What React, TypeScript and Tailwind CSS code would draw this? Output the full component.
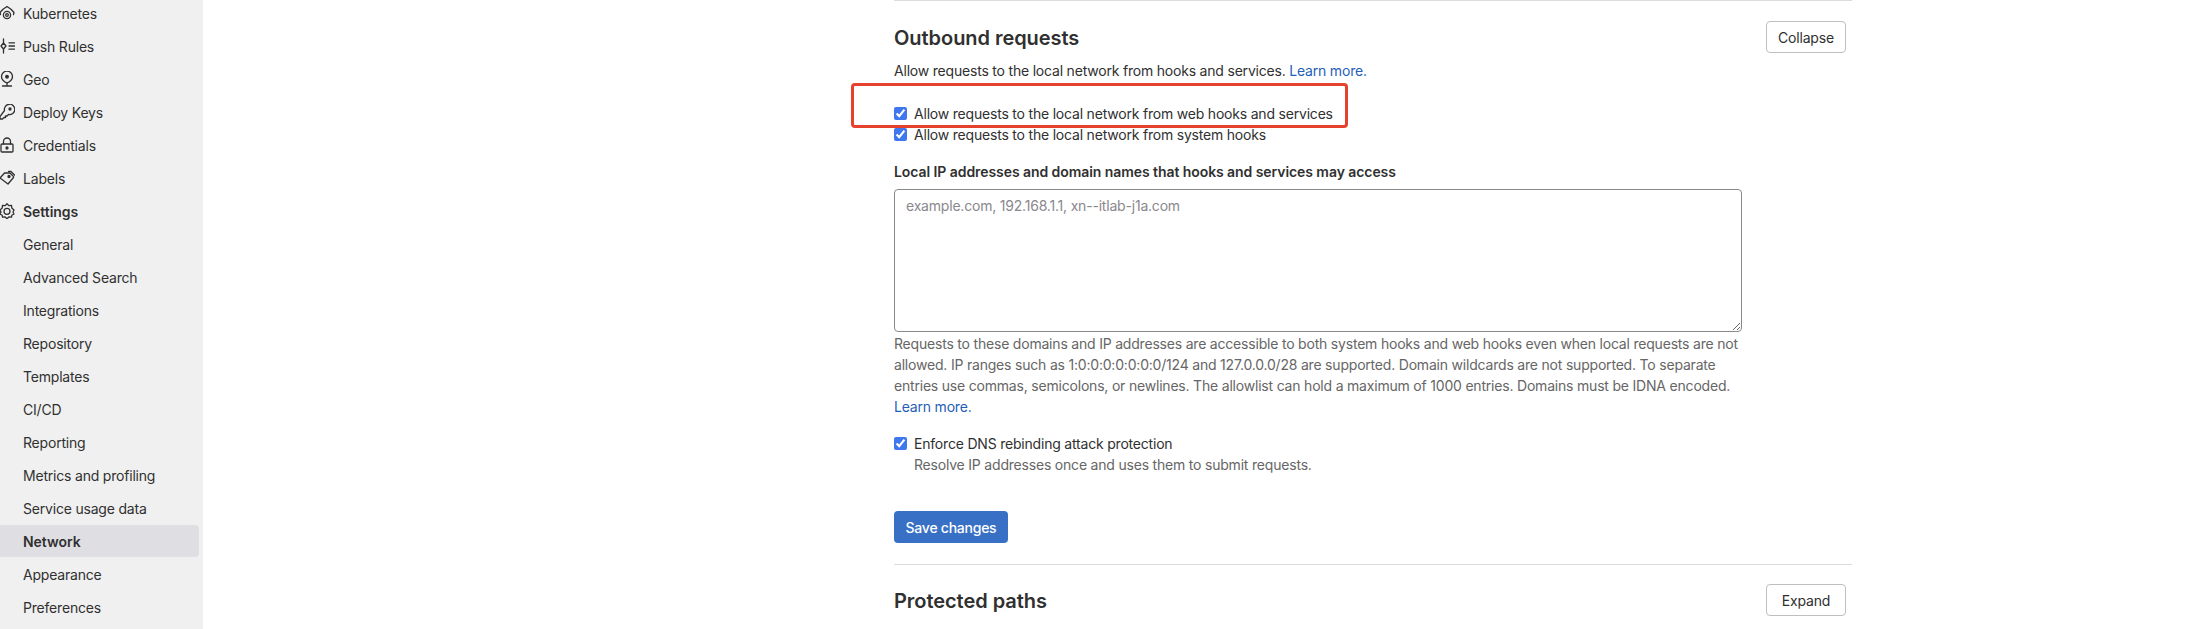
const SANS = 'font-["Inter","Noto_Sans",sans-serif]'

const icons: Record<string, React.ReactNode> = {
  kubernetes: (
    <>
      <path d="M1.500 9.500 1 7.500 4 4.200 8 1.500l4 2.700 3 3.300-.5 2" />
      <circle cx="8" cy="10" r="3.600" />
      <circle cx="8" cy="10" r="1.300" />
    </>
  ),
  push: (
    <>
      <path d="M4.500 1v4M4.500 11v4" />
      <path d="M4.500 5 7 8l-2.500 3L2 8Z" />
      <path d="M10 4.800h5.500M10 8h5.500M10 11.200h5.500" />
    </>
  ),
  geo: (
    <>
      <path d="M8 12c-3-1.400-5.500-3.500-5.500-6.300a5.500 5.500 0 0 1 11 0C13.500 8.500 11 10.600 8 12Z" />
      <circle cx="8" cy="5.700" r="1.300" fill="currentColor" />
      <path d="M8 12v3M3.500 15h9" />
    </>
  ),
  key: (
    <>
      <path d="M5.500 6.500a5.200 5.200 0 1 1 4 4L8 12H6.500v1.500H5L3.500 15H1v-2.500Z" />
      <circle cx="11" cy="5" r="1" fill="currentColor" />
    </>
  ),
  lock: (
    <>
      <rect x="2" y="7" width="12" height="8" rx="1" />
      <path d="M4.500 7V4.500a3.500 3.500 0 0 1 7 0V7" />
      <circle cx="8" cy="11" r="1" fill="currentColor" />
    </>
  ),
  labels: (
    <>
      <path d="M5.500 3H11l3.500 3.500v1L9 14 1 8Z" />
      <path d="M9.500 1.500H12L15.500 5" />
      <circle cx="10" cy="6.500" r="1" fill="currentColor" />
    </>
  ),
  settings: (
    <>
      <path d="M8 .8l1.800 1.800 2.700-.2.300 2.600L15 7l-1 2 1 2-2.200 1.300-.3 1.900-2.700-.2L8 15.700l-1.800-1.700-2.700.2-.3-1.900L1 11l1-2-1-2 2.200-1.900.3-2.700 2.700.2Z" />
      <circle cx="8" cy="8.300" r="3" />
    </>
  ),
}

type NavItem = { label: string; icon?: string; bold?: boolean; active?: boolean }

const NAV: NavItem[] = [
  { label: 'Kubernetes', icon: 'kubernetes' },
  { label: 'Push Rules', icon: 'push' },
  { label: 'Geo', icon: 'geo' },
  { label: 'Deploy Keys', icon: 'key' },
  { label: 'Credentials', icon: 'lock' },
  { label: 'Labels', icon: 'labels' },
  { label: 'Settings', icon: 'settings', bold: true },
  { label: 'General' },
  { label: 'Advanced Search' },
  { label: 'Integrations' },
  { label: 'Repository' },
  { label: 'Templates' },
  { label: 'CI/CD' },
  { label: 'Reporting' },
  { label: 'Metrics and profiling' },
  { label: 'Service usage data' },
  { label: 'Network', bold: true, active: true },
  { label: 'Appearance' },
  { label: 'Preferences' },
]

function Sidebar() {
  return (
    <aside className="w-[203px] shrink-0 h-[629px] overflow-hidden bg-[#f0f0f0] text-[14px] text-[#303030]">
      <ul className="-mt-[3px]">
        {NAV.map((item) => (
          <li
            key={item.label}
            className={`relative h-8 mb-px mr-1 flex items-center pl-[23px] rounded-r ${item.active ? 'bg-[#dfdfe3]' : ''} ${item.bold ? 'font-semibold tracking-[-0.05px]' : ''}`}
          >
            {item.icon && (
              <svg
                viewBox="0 0 16 16"
                fill="none"
                stroke="currentColor"
                strokeWidth={1.300}
                strokeLinejoin="round"
                strokeLinecap="round"
                className="absolute -left-px w-4 h-4"
              >
                {icons[item.icon]}
              </svg>
            )}
            {item.label}
          </li>
        ))}
      </ul>
    </aside>
  )
}

function SectionHeader({ title, action }: { title: string; action: string }) {
  return (
    <div className="flex items-center justify-between pr-[6px]">
      <h2 className="h-8 pt-px text-[20px] leading-8 font-semibold tracking-[-0.05px] text-[#303030]">{title}</h2>
      <button className="h-8 w-20 rounded border border-[#bfbfc3] bg-white text-[14px] text-[#303030]">
        {action}
      </button>
    </div>
  )
}

function Check({ label }: { label: string }) {
  return (
    <label className="flex items-center h-[21px] gap-[7px] text-[#303030]">
      <input type="checkbox" defaultChecked className="m-0 w-[13px] h-[13px] accent-[#3f78ee]" />
      {label}
    </label>
  )
}

export default function App() {
  return (
    <div className={`flex h-[629px] overflow-hidden bg-white text-[14px] leading-[21px] tracking-[-0.2px] ${SANS}`}>
      <Sidebar />
      <main className="ml-[691px] w-[958px] shrink-0">
        <section className="relative border-t border-[#dcdcde] pt-5 pb-[21px] border-b">
          <SectionHeader title="Outbound requests" action="Collapse" />
          <p className="mt-[7px] text-[#303030]">
            Allow requests to the local network from hooks and services.{' '}
            <a href="#" className="text-[#1f5fb8]">Learn more.</a>
          </p>
          <div className="mt-[22px]">
            <Check label="Allow requests to the local network from web hooks and services" />
          </div>
          <Check label="Allow requests to the local network from system hooks" />
          <label className="block mt-[16px] font-semibold tracking-[-0.07px] text-[#303030]">
            Local IP addresses and domain names that hooks and services may access
          </label>
          <textarea
            placeholder="example.com, 192.168.1.1, xn--itlab-j1a.com"
            className="block mt-[7px] w-[848px] h-[143px] rounded border border-[#89888d] px-[11px] py-[5px] placeholder:text-[#89888d] outline-none"
          />
          <p className="mt-[1px] w-[848px] text-[#666666]">
            Requests to these domains and IP addresses are accessible to both system hooks and web hooks even when local requests are not allowed. IP ranges such as 1:0:0:0:0:0:0:0/124 and 127.0.0.0/28 are supported. Domain wildcards are not supported. To separate entries use commas, semicolons, or newlines. The allowlist can hold a maximum of 1000 entries. Domains must be IDNA encoded.{' '}
            <a href="#" className="text-[#1f5fb8]">Learn more.</a>
          </p>
          <div className="mt-[16px]">
            <Check label="Enforce DNS rebinding attack protection" />
            <p className="pl-5 text-[#666666]">Resolve IP addresses once and uses them to submit requests.</p>
          </div>
          <button className="block mt-[36px] h-8 w-[114px] rounded bg-[#3870c6] text-[14px] font-medium tracking-[-0.25px] text-white">
            Save changes
          </button>
          <div className="absolute left-[-43px] top-[82px] w-[497px] h-[45px] rounded border-[3px] border-[#e5412d]" />
        </section>
        <section className="pt-[19px]">
          <SectionHeader title="Protected paths" action="Expand" />
        </section>
      </main>
    </div>
  )
}
